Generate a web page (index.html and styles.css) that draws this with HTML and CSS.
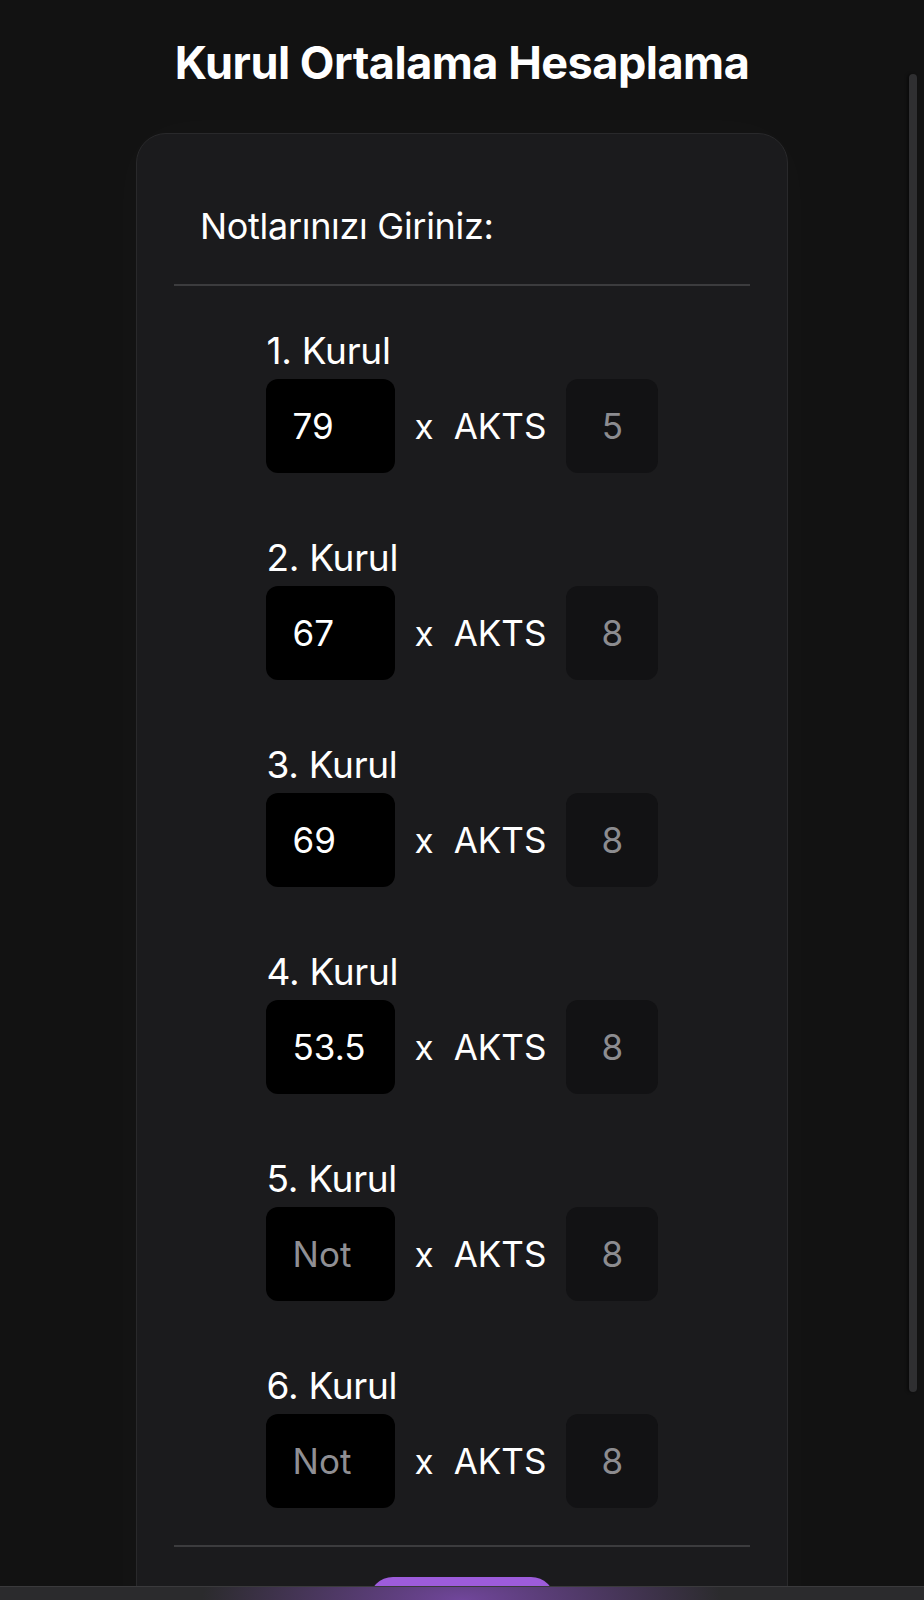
FILE: index.html
```html
<!DOCTYPE html>
<html lang="tr">
<head>
<meta charset="utf-8">
<title>Kurul Ortalama Hesaplama</title>
<link rel="stylesheet" href="styles.css">
</head>
<body>
<h1 class="title">Kurul Ortalama Hesaplama</h1>
<main class="card">
  <h2 class="card-heading">Notlarınızı Giriniz:</h2>
  <hr class="divider">
  <div class="rows">
    <div class="row">
      <label class="row-label">1. Kurul</label>
      <div class="row-inputs">
        <input class="grade" type="text" value="79" placeholder="Not">
        <span class="times">x</span>
        <span class="akts">AKTS</span>
        <input class="credit" type="text" value="5">
      </div>
    </div>
    <div class="row">
      <label class="row-label">2. Kurul</label>
      <div class="row-inputs">
        <input class="grade" type="text" value="67" placeholder="Not">
        <span class="times">x</span>
        <span class="akts">AKTS</span>
        <input class="credit" type="text" value="8">
      </div>
    </div>
    <div class="row">
      <label class="row-label">3. Kurul</label>
      <div class="row-inputs">
        <input class="grade" type="text" value="69" placeholder="Not">
        <span class="times">x</span>
        <span class="akts">AKTS</span>
        <input class="credit" type="text" value="8">
      </div>
    </div>
    <div class="row">
      <label class="row-label">4. Kurul</label>
      <div class="row-inputs">
        <input class="grade" type="text" value="53.5" placeholder="Not">
        <span class="times">x</span>
        <span class="akts">AKTS</span>
        <input class="credit" type="text" value="8">
      </div>
    </div>
    <div class="row">
      <label class="row-label">5. Kurul</label>
      <div class="row-inputs">
        <input class="grade" type="text" value="" placeholder="Not">
        <span class="times">x</span>
        <span class="akts">AKTS</span>
        <input class="credit" type="text" value="8">
      </div>
    </div>
    <div class="row">
      <label class="row-label">6. Kurul</label>
      <div class="row-inputs">
        <input class="grade" type="text" value="" placeholder="Not">
        <span class="times">x</span>
        <span class="akts">AKTS</span>
        <input class="credit" type="text" value="8">
      </div>
    </div>
  </div>
  <hr class="divider divider-bottom">
  <div class="actions">
    <button class="calc" type="button"></button>
  </div>
</main>
<div class="scroll-indicator"></div>
<div class="toolbar"></div>
</body>
</html>
```

FILE: styles.css
```css
html, body {
  margin: 0;
  padding: 0;
}
body {
  background: #121212;
  color: #ffffff;
  font-family: Inter, "Noto Sans", "DejaVu Sans", sans-serif;
  overflow: hidden;
  height: 1600px;
}
.title {
  margin: 0;
  padding-top: 36px;
  font-size: 45px;
  line-height: 54px;
  font-weight: 700;
  text-align: center;
  letter-spacing: -0.5px;
}
.card {
  width: 652px;
  margin: 43px auto 0;
  background: #1b1b1d;
  border: 1px solid #29292b;
  border-radius: 30px;
  padding: 0 37px;
  box-sizing: border-box;
  box-shadow: 0 0 60px rgba(255, 255, 255, 0.025);
  height: 1600px;
}
.card-heading {
  margin: 0;
  padding: 70px 0 0 26px;
  font-size: 36px;
  line-height: 44px;
  font-weight: 400;
  letter-spacing: -0.3px;
}
.divider {
  border: 0;
  height: 2px;
  background: #3c3c3e;
  margin: 36px 0 0;
}
.rows {
  display: flex;
  flex-direction: column;
  align-items: center;
  gap: 63px;
  padding-top: 43px;
}
.row {
  display: flex;
  flex-direction: column;
  gap: 6px;
}
.row-label {
  font-size: 37px;
  line-height: 44px;
  padding-left: 1px;
  letter-spacing: -0.3px;
}
.row-inputs {
  display: flex;
  align-items: center;
  gap: 20px;
}
.grade, .credit {
  border: 0;
  outline: none;
  height: 94px;
  border-radius: 12px;
  font-family: inherit;
  font-size: 35px;
  box-sizing: border-box;
  margin: 0;
}
.grade {
  width: 129px;
  background: #000000;
  color: #ffffff;
  padding: 0 0 0 27px;
}
.grade::placeholder {
  color: #8f8f94;
  opacity: 1;
}
.credit {
  width: 92px;
  background: #121214;
  color: #8c8c90;
  text-align: center;
  padding: 0;
}
.times, .akts {
  font-size: 35px;
  line-height: 42px;
}
.divider-bottom {
  margin-top: 37px;
}
.actions {
  display: flex;
  justify-content: center;
  padding-top: 30px;
}
.calc {
  width: 186px;
  height: 60px;
  border: 0;
  border-radius: 24px;
  background: #9d5cdb;
  color: #ffffff;
  font-family: inherit;
  font-size: 30px;
}
.scroll-indicator {
  position: fixed;
  top: 74px;
  right: 7px;
  width: 8px;
  height: 1318px;
  border-radius: 4px;
  background: #2f2f31;
  box-shadow: -2px 0 3px rgba(0, 0, 0, 0.4);
}
.toolbar {
  position: fixed;
  left: 0;
  right: 0;
  bottom: 0;
  height: 13px;
  border-top: 1px solid #3a3a3c;
  background: radial-gradient(ellipse 260px 80px at 462px 100%, rgba(125, 75, 175, 0.85), rgba(44, 44, 46, 0) 100%), #2b2b2d;
}
```
